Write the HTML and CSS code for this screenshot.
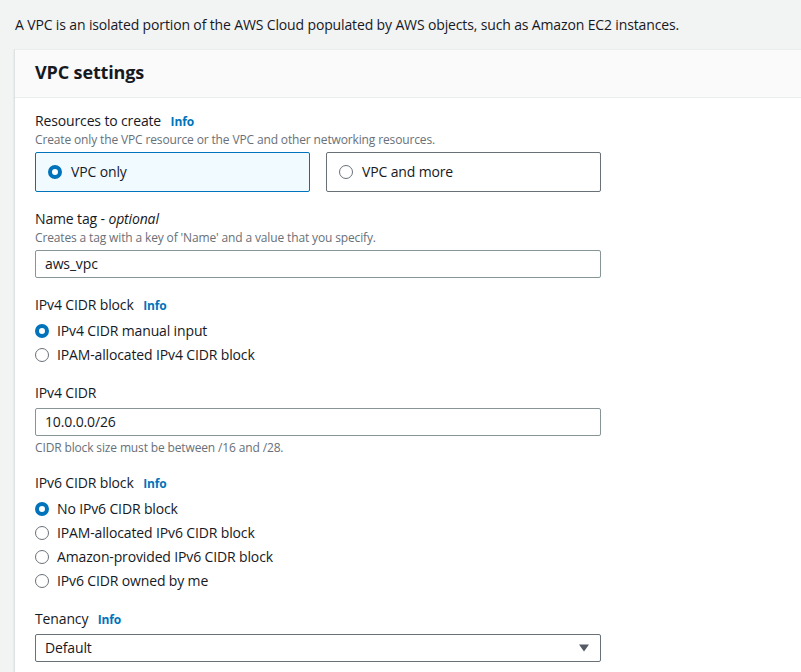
FILE: index.html
```html
<!DOCTYPE html>
<html lang="en">
<head>
<meta charset="utf-8">
<title>VPC settings</title>
<link rel="stylesheet" href="styles.css">
</head>
<body>
<p class="intro">A VPC is an isolated portion of the AWS Cloud populated by AWS objects, such as Amazon EC2 instances.</p>
<div class="card">
  <div class="card-header"><h2>VPC settings</h2></div>
  <div class="card-body">
    <div class="field">
      <div class="label">Resources to create <a class="info">Info</a></div>
      <div class="desc">Create only the VPC resource or the VPC and other networking resources.</div>
      <div class="tiles">
        <div class="tile selected"><span class="radio checked"></span><span>VPC only</span></div>
        <div class="tile"><span class="radio"></span><span>VPC and more</span></div>
      </div>
    </div>
    <div class="field">
      <div class="label">Name tag - <i>optional</i></div>
      <div class="desc">Creates a tag with a key of 'Name' and a value that you specify.</div>
      <div class="input">aws_vpc</div>
    </div>
    <div class="field">
      <div class="label">IPv4 CIDR block <a class="info">Info</a></div>
      <div class="radios">
        <div class="row"><span class="radio checked"></span><span>IPv4 CIDR manual input</span></div>
        <div class="row"><span class="radio"></span><span>IPAM-allocated IPv4 CIDR block</span></div>
      </div>
    </div>
    <div class="field">
      <div class="label">IPv4 CIDR</div>
      <div class="input">10.0.0.0/26</div>
      <div class="hint">CIDR block size must be between /16 and /28.</div>
    </div>
    <div class="field">
      <div class="label">IPv6 CIDR block <a class="info">Info</a></div>
      <div class="radios">
        <div class="row"><span class="radio checked"></span><span>No IPv6 CIDR block</span></div>
        <div class="row"><span class="radio"></span><span>IPAM-allocated IPv6 CIDR block</span></div>
        <div class="row"><span class="radio"></span><span>Amazon-provided IPv6 CIDR block</span></div>
        <div class="row"><span class="radio"></span><span>IPv6 CIDR owned by me</span></div>
      </div>
    </div>
    <div class="field">
      <div class="label">Tenancy <a class="info">Info</a></div>
      <div class="input select"><span>Default</span>
        <svg class="caret" width="12" height="8" viewBox="0 0 12 8"><path d="M1 0.5h10L6 7.5z" fill="#545b64"/></svg>
      </div>
    </div>
  </div>
</div>
</body>
</html>
```
FILE: styles.css
```css
html, body {
  margin: 0;
  padding: 0;
  background: #f2f3f3;
  overflow: hidden;
  height: 100%;
}
body {
  font-family: "Open Sans", "Noto Sans", sans-serif;
  font-size: 14px;
  line-height: 22px;
  color: #16191f;
  letter-spacing: -0.14px;
  display: flex;
  flex-direction: column;
}
.intro {
  margin: 0;
  padding: 14px 0 0 15px;
  height: 22px;
  flex: none;
}
.card {
  margin: 13px -20px 0 14px;
  background: #fff;
  border-top: 1px solid #eaeded;
  border-left: 1px solid #e0e3e3;
  box-shadow: 0 1px 1px 0 rgba(0, 28, 36, 0.2);
  flex: 1;
  min-height: 0;
  overflow: hidden;
}
.card-header {
  background: #fafafa;
  border-bottom: 1px solid #eaeded;
  padding: 11px 20px 14px 20px;
}
.card-header h2 {
  margin: 0;
  font-size: 18px;
  line-height: 22px;
  font-weight: 700;
}
.card-body {
  padding: 12px 20px 0 20px;
  display: flex;
  flex-direction: column;
  gap: 16px;
  width: 566px;
}
.field {
  display: flex;
  flex-direction: column;
}
.label {
  font-size: 14px;
  line-height: 22px;
  height: 22px;
}
.info {
  color: #0073bb;
  font-weight: 700;
  font-size: 12px;
  line-height: 1;
  margin-left: 6px;
}
.desc, .hint {
  font-size: 12px;
  line-height: 16px;
  color: #687078;
}
.desc {
  margin-bottom: 4px;
}
.hint {
  margin-top: 4px;
}
.tiles {
  display: flex;
  gap: 16px;
}
.tile {
  flex: 1;
  height: 40px;
  box-sizing: border-box;
  border: 1px solid #687078;
  border-radius: 2px;
  display: flex;
  align-items: center;
  padding-left: 12px;
  gap: 9px;
}
.tile.selected {
  background: #f1faff;
  border-color: #0073bb;
}
.radio {
  width: 14px;
  height: 14px;
  box-sizing: border-box;
  border-radius: 50%;
  border: 1.5px solid #687078;
  background: #fff;
  flex: none;
}
.radio.checked {
  border: 4px solid #0073bb;
}
.radios {
  margin-top: 3px;
  margin-bottom: -1px;
}
.row {
  height: 24px;
  display: flex;
  align-items: center;
  gap: 8px;
}
.input {
  height: 28px;
  box-sizing: border-box;
  border: 1px solid #879596;
  border-radius: 2px;
  padding: 0 9px;
  display: flex;
  align-items: center;
  background: #fff;
  flex: none;
}
.label + .input {
  margin-top: 4px;
}
.select {
  justify-content: space-between;
  border-color: #687078;
}
.caret {
  margin-right: 1px;
}
```
